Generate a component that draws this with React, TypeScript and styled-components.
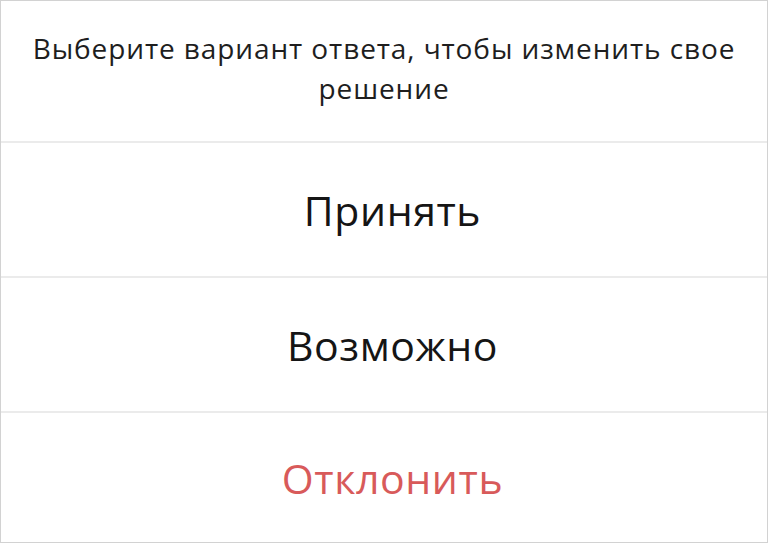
import React from "react";
import styled, { createGlobalStyle } from "styled-components";

const Global = createGlobalStyle`
  html, body { margin: 0; padding: 0; background: #ffffff; }
  body { font-family: "Open Sans", "Noto Sans", sans-serif; }
`;

const Sheet = styled.div`
  box-sizing: border-box;
  width: 768px;
  height: 543px;
  border: 1px solid #d2d2d2;
  background: #ffffff;
  display: flex;
  flex-direction: column;
`;

const Prompt = styled.div`
  box-sizing: border-box;
  flex: 0 0 142px;
  display: flex;
  align-items: center;
  justify-content: center;
  padding: 0 20px 6px;
  text-align: center;
  font-size: 28px;
  letter-spacing: 0.9px;
  line-height: 40px;
  color: #1e1e1e;
  border-bottom: 2px solid #ebebeb;
`;

const Option = styled.button<{ $danger?: boolean; $last?: boolean }>`
  box-sizing: border-box;
  flex: ${(p) => (p.$last ? "1" : "0 0 135px")};
  display: flex;
  align-items: center;
  justify-content: center;
  padding: 0 0 0 17px;
  border: none;
  border-bottom: ${(p) => (p.$last ? "none" : "2px solid #ebebeb")};
  background: transparent;
  font-family: inherit;
  font-size: 41px;
  letter-spacing: 0.6px;
  color: ${(p) => (p.$danger ? "#d85a5a" : "#151515")};
  cursor: pointer;
`;

export default function App() {
  return (
    <>
      <Global />
      <Sheet>
        <Prompt>Выберите вариант ответа, чтобы изменить свое решение</Prompt>
        <Option>Принять</Option>
        <Option>Возможно</Option>
        <Option $danger $last>
          Отклонить
        </Option>
      </Sheet>
    </>
  );
}
